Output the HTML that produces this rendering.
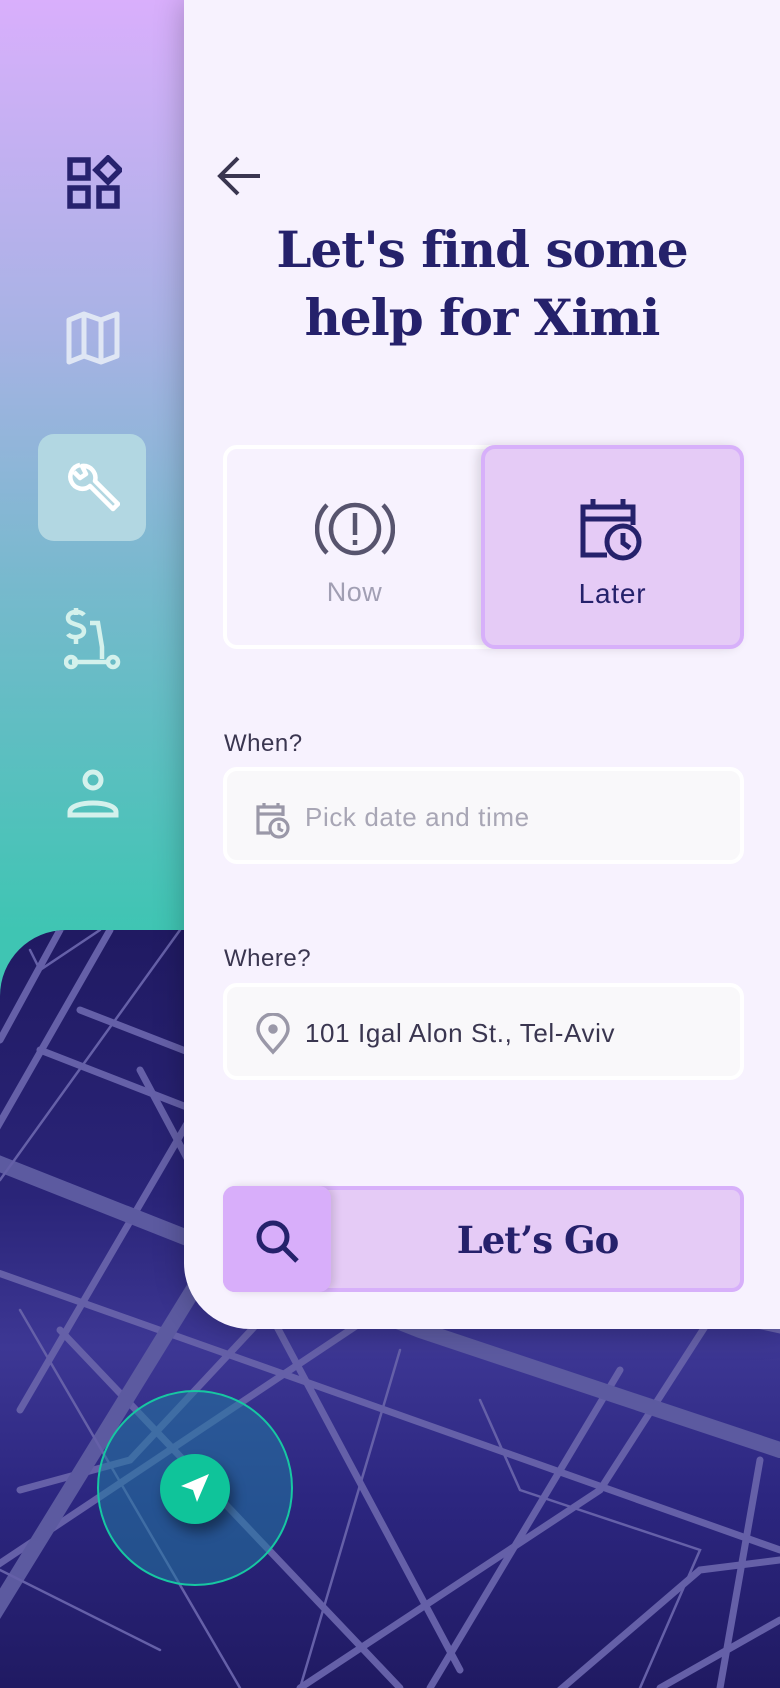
<!DOCTYPE html>
<html><head><meta charset="utf-8"><style>
*{margin:0;padding:0;box-sizing:border-box}
body{width:780px;height:1688px;overflow:hidden;position:relative;background:#201a62;font-family:"Liberation Sans",sans-serif}
.side{position:absolute;left:0;top:0;width:184px;height:1010px;background:linear-gradient(180deg,#d9affc 0%,#a7b2e4 33%,#77b9cd 58%,#3fc5b3 92%,#3fc5b3 100%)}
.map{position:absolute;left:0;top:930px;width:780px;height:758px;border-top-left-radius:66px;overflow:hidden;background:linear-gradient(180deg,#201a62 0%,#2a2478 35%,#3d3794 55%,#2c2680 75%,#201a62 100%)}
.panel{position:absolute;left:184px;top:0;width:596px;height:1329px;background:#f7f2fe;border-bottom-left-radius:66px;box-shadow:0 0 30px rgba(0,0,0,.25)}
.title{position:absolute;left:0;width:596px;text-align:center;top:216px;font-family:"DejaVu Serif",serif;font-weight:bold;font-size:50px;line-height:68px;color:#25216b;letter-spacing:-1px}
.toggle{position:absolute;left:39px;top:445px;width:521px;height:204px;border:4px solid #fff;border-radius:14px;background:#f7f2fe}
.later{position:absolute;left:297px;top:445px;width:263px;height:204px;border:4px solid #d7b0fa;border-radius:14px;background:#e5cbf6;box-shadow:-4px 0 10px rgba(0,0,0,.12)}
.lbl{position:absolute;left:40px;font-size:24px;color:#3a3650;letter-spacing:.5px}
.inp{position:absolute;left:39px;width:521px;height:97px;border:4px solid #fff;border-radius:14px;background:#f9f8fa;font-size:26px;letter-spacing:.6px}
.btn{position:absolute;left:39px;top:1186px;width:521px;height:106px;border:4px solid #d7b0fa;border-radius:12px;background:#e5cbf6}
</style></head><body>
<div class="side">
 <svg style="position:absolute;left:66px;top:155px" width="56" height="56" viewBox="0 0 56 56" fill="none" stroke="#27226e" stroke-width="5.5"><rect x="4" y="5" width="18" height="18"/><rect x="4" y="33" width="18" height="18"/><rect x="33" y="33" width="18" height="18"/><path d="M42 3 L54 15 L42 27 L30 15Z"/></svg>
 <svg style="position:absolute;left:66px;top:310px" width="54" height="56" viewBox="0 0 54 56" fill="none" stroke="#dfe6f4" stroke-width="5" stroke-linejoin="round"><path d="M3 10 L18 4 L35 10 L51 4 V46 L35 52 L18 46 L3 52Z M18 4 V46 M35 10 V52"/></svg>
 <div style="position:absolute;left:38px;top:434px;width:108px;height:107px;border-radius:16px;background:#b2d7e2"></div>
 <svg style="position:absolute;left:66px;top:462px" width="54" height="54" viewBox="0 0 54 54" fill="none" stroke="#fff" stroke-width="4.5" stroke-linejoin="round"><path d="M14 3 A12 12 0 1 0 24 24 L47 47 L52 42 L29 19 A12 12 0 0 0 16 4 L20 12 L14 16 L8 10"/></svg>
 <svg style="position:absolute;left:64px;top:607px" width="58" height="64" viewBox="0 0 58 64" fill="none" stroke="#d4f1ec" stroke-width="4.5"><path d="M20 8 C16 3 4 4 4 11 C4 19 20 16 20 24 C20 31 7 32 4 27 M12 1 V8 M12 31 V37 M26 16 H34 L38 40 V52 M8 55 H44"/><circle cx="7" cy="55" r="5"/><circle cx="49" cy="55" r="5"/></svg>
 <svg style="position:absolute;left:67px;top:768px" width="52" height="52" viewBox="0 0 52 52" fill="none" stroke="#d4f1ec" stroke-width="5"><circle cx="26" cy="12" r="8"/><path d="M3 47 V44 C3 32 49 32 49 44 V47 Z"/></svg>
</div>
<div class="map">
<svg width="780" height="758" viewBox="0 0 780 758" fill="none" stroke="#6560a8" stroke-linecap="round">
<g stroke-width="7"><path d="M-10 340 L780 620"/><path d="M110 0 L-10 210"/><path d="M230 120 L20 480"/><path d="M140 140 L460 740"/><path d="M60 400 L400 758"/><path d="M780 280 L600 560 L300 758"/><path d="M620 440 L430 758"/><path d="M380 380 L-10 640"/><path d="M760 530 L720 758"/><path d="M660 758 L780 690"/><path d="M40 120 L220 190"/><path d="M0 110 L60 0"/><path d="M270 380 L130 530 L20 560"/><path d="M560 760 L700 640 L780 630"/><path d="M80 80 L260 150"/><path d="M460 330 L780 400"/></g>
<g stroke-width="16" stroke="#5c5aa0"><path d="M-10 230 L420 400 L780 520"/><path d="M230 300 L-10 690"/></g>
<g stroke-width="2.5"><path d="M0 250 L180 0"/><path d="M20 380 L240 758"/><path d="M400 420 L300 758"/><path d="M480 470 L520 560 L700 620 L640 758"/><path d="M0 640 L160 720"/><path d="M30 20 L40 40 L100 0"/></g>
</svg>
<div style="position:absolute;left:97px;top:460px;width:196px;height:196px;border-radius:50%;border:2px solid #17c7a2;background:rgba(33,120,160,.55)"></div>
<div style="position:absolute;left:160px;top:524px;width:70px;height:70px;border-radius:50%;background:#0fc49a;box-shadow:4px 8px 12px rgba(0,0,0,.4)"></div>
<svg style="position:absolute;left:177px;top:540px" width="36" height="36" viewBox="0 0 36 36"><path d="M32 4 L4 16 L16 20 L20 32Z" fill="#fff"/></svg>
</div>
<div class="panel">
 <svg style="position:absolute;left:32px;top:156px" width="44" height="40" viewBox="0 0 44 40" fill="none" stroke="#3a3650" stroke-width="4"><path d="M22 2 L4 20 L22 38 M4 20 H44"/></svg>
 <div class="title">Let's find some<br>help for Ximi</div>
 <div class="toggle"></div>
 <svg style="position:absolute;left:131px;top:497px" width="80" height="64" viewBox="0 0 80 64" fill="none" stroke="#57546e" stroke-width="4.5"><circle cx="40" cy="32" r="24"/><path d="M40 16 V38 M40 43 V48"/><path d="M12 8 A34 34 0 0 0 12 56 M68 8 A34 34 0 0 1 68 56"/></svg>
 <div style="position:absolute;left:39px;width:263px;top:577px;text-align:center;font-size:27px;color:#a19fb3;letter-spacing:.5px">Now</div>
 <div class="later"></div>
 <svg style="position:absolute;left:395px;top:495px" width="64" height="70" viewBox="0 0 64 70" fill="none" stroke="#25216b" stroke-width="5"><path d="M28 60 H4 V12 H54 V30 M4 24 H54 M14 4 V14 M44 4 V14"/><circle cx="44" cy="47" r="16"/><path d="M44 38 V48 L51 53"/></svg>
 <div style="position:absolute;left:297px;width:263px;top:578px;text-align:center;font-size:28px;color:#25216b;letter-spacing:.8px">Later</div>
 <div class="lbl" style="top:730px">When?</div>
 <div class="inp" style="top:767px">
  <svg style="position:absolute;left:28px;top:30px" width="36" height="38" viewBox="0 0 36 38" fill="none" stroke="#9a98a8" stroke-width="3.2"><path d="M15 32 H3 V6 H28 V15 M3 13 H28 M9 2 V7 M23 2 V7"/><circle cx="24" cy="27" r="9"/><path d="M24 22 V28 L28 30"/></svg>
  <div style="position:absolute;left:78px;top:31px;color:#a8a6b5">Pick date and time</div>
 </div>
 <div class="lbl" style="top:945px">Where?</div>
 <div class="inp" style="top:983px">
  <svg style="position:absolute;left:28px;top:26px" width="36" height="42" viewBox="0 0 36 42" fill="none" stroke="#9a98a8" stroke-width="3.5"><path d="M18 39 C8 28 3 22 3 16 A15 15 0 0 1 33 16 C33 22 28 28 18 39Z"/><circle cx="18" cy="16" r="3" fill="#9a98a8"/></svg>
  <div style="position:absolute;left:78px;top:31px;color:#3a3650">101 Igal Alon St., Tel-Aviv</div>
 </div>
 <div class="btn"></div>
 <div style="position:absolute;left:39px;top:1186px;width:108px;height:106px;border-radius:12px;background:#d8aefa;box-shadow:4px 0 8px rgba(0,0,0,.12)"></div>
 <svg style="position:absolute;left:71px;top:1219px" width="46" height="46" viewBox="0 0 46 46" fill="none" stroke="#25216b" stroke-width="5"><circle cx="18" cy="18" r="14"/><path d="M28 28 L42 42"/></svg>
 <div style="position:absolute;left:147px;width:413px;top:1218px;text-align:center;font-family:'DejaVu Serif',serif;font-weight:bold;font-size:37px;color:#25216b;letter-spacing:-1px">Let’s Go</div>
</div>
</body></html>
